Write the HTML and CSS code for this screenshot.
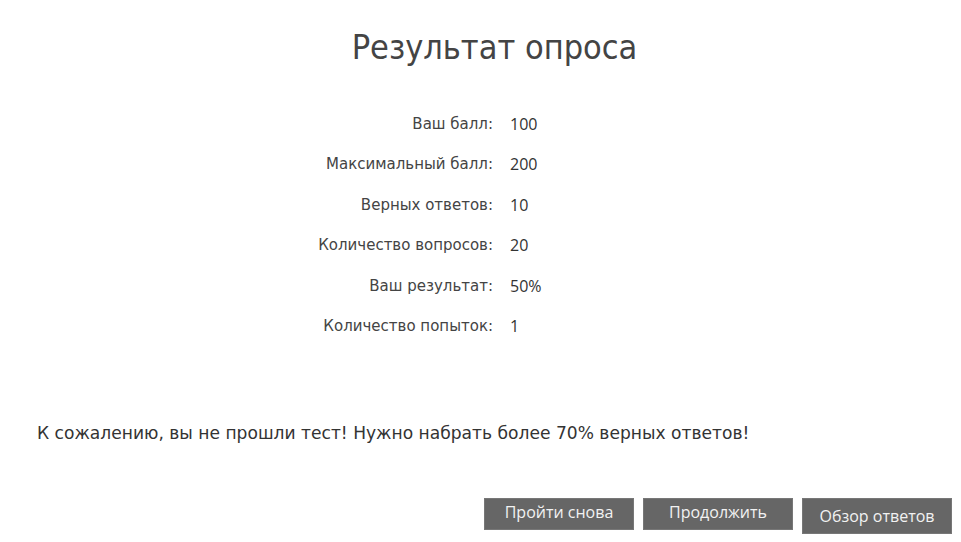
FILE: index.html
```html
<!DOCTYPE html>
<html lang="ru">
<head>
<meta charset="utf-8">
<title>Результат опроса</title>
<link rel="stylesheet" href="styles.css">
</head>
<body>
<div class="page">
  <h1 class="title">Результат опроса</h1>
  <div class="stats">
    <div class="label">Ваш балл:</div><div class="value">100</div>
    <div class="label">Максимальный балл:</div><div class="value">200</div>
    <div class="label">Верных ответов:</div><div class="value">10</div>
    <div class="label">Количество вопросов:</div><div class="value">20</div>
    <div class="label">Ваш результат:</div><div class="value">50%</div>
    <div class="label">Количество попыток:</div><div class="value">1</div>
  </div>
  <p class="message">К сожалению, вы не прошли тест! Нужно набрать более 70% верных ответов!</p>
  <div class="actions">
    <button class="btn">Пройти снова</button>
    <button class="btn">Продолжить</button>
    <button class="btn btn-last">Обзор ответов</button>
  </div>
</div>
</body>
</html>
```
FILE: styles.css
```css
html, body {
  margin: 0;
  padding: 0;
  background: #ffffff;
}
.page {
  width: 961px;
  height: 542px;
  font-family: "DejaVu Sans", sans-serif;
  color: #444;
  display: flex;
  flex-direction: column;
}
.title {
  margin: 25px 0 0;
  text-align: center;
  font-family: "DejaVu Sans Condensed", "DejaVu Sans", sans-serif;
  font-weight: normal;
  font-size: 34px;
  line-height: 44px;
  color: #444;
  padding-left: 28px;
}
.stats {
  margin-top: 43px;
  display: grid;
  grid-template-columns: 493px auto;
  grid-auto-rows: 24px;
  column-gap: 17px;
  row-gap: 16.4px;
  align-items: center;
}
.label {
  text-align: right;
  font-size: 15px;
  line-height: 24px;
  color: #444;
}
.value {
  font-family: "Open Sans", sans-serif;
  font-size: 16px;
  line-height: 24px;
  color: #333;
}
.message {
  margin: 83px 0 0 37px;
  font-size: 17.1px;
  line-height: 24px;
  color: #333;
}
.actions {
  margin-top: 53px;
  display: flex;
  justify-content: flex-end;
  align-items: flex-start;
  gap: 9px;
  padding-right: 9px;
}
.btn {
  width: 150px;
  height: 32px;
  border: 1px solid #777;
  background: #666;
  color: #f2f2f2;
  font-family: "Open Sans", sans-serif;
  font-size: 16px;
  padding: 0 0 4px;
  margin: 0;
}
.btn-last {
  height: 36px;
  padding: 0;
}
```
